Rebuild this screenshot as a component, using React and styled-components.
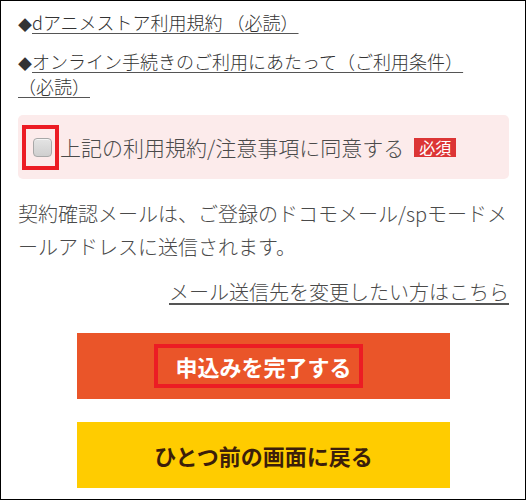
import React from 'react'
import styled, { createGlobalStyle } from 'styled-components'

const GlobalStyle = createGlobalStyle`
  html, body { margin: 0; padding: 0; background: #fff; }
  body {
    font-family: "Noto Sans CJK JP", "Noto Sans", Roboto, sans-serif;
    font-weight: 300;
    color: #444;
  }
`

const Page = styled.div`
  box-sizing: border-box;
  width: 526px;
  height: 500px;
  border: 1px solid #000;
  padding: 9px 16px 0 17px;
  overflow: hidden;
`

const TermLink = styled.p`
  margin: 0 0 14px;
  font-size: 18px;
  line-height: 25px;
  color: #333;
  a {
    color: #333;
    text-decoration: underline;
    text-decoration-color: #555;
    text-underline-offset: 3px;
  }
`

const Diamond = styled.span`
  font-size: 14px;
  line-height: 0;
  color: #333;
`

const NoWrap = styled.span`
  white-space: nowrap;
`

const AgreeBox = styled.label`
  display: flex;
  align-items: center;
  box-sizing: border-box;
  height: 64px;
  margin-top: 16px;
  padding: 0 0 0 4px;
  background: #fcebeb;
  border-radius: 5px;
  cursor: pointer;
`

const Highlight = styled.span`
  box-sizing: border-box;
  display: flex;
  align-items: center;
  justify-content: center;
  width: 37px;
  height: 45px;
  border: 4px solid #ec1c24;
  padding-left: 3px;
  margin-right: 1px;
`

const Check = styled.span`
  box-sizing: border-box;
  width: 19px;
  height: 19px;
  border-radius: 4px;
  border: 1px solid #a8a8a8;
  background: linear-gradient(#e4e4e4, #cfcfcf);
  box-shadow: inset 0 1px 0 #f4f4f4;
`

const AgreeText = styled.span`
  font-size: 21px;
  line-height: 1;
  color: #4a4a4a;
`

const Badge = styled.span`
  display: inline-flex;
  align-items: center;
  justify-content: center;
  width: 42px;
  height: 19px;
  margin-left: 10px;
  background: #dc3535;
  color: #fff;
  font-size: 16px;
  font-weight: 400;
  line-height: 1;
`

const Notice = styled.p`
  margin: 18px 0 0;
  font-size: 20px;
  line-height: 33px;
  color: #4a4a4a;
`

const ChangeLink = styled.a`
  display: block;
  margin-top: 14px;
  text-align: right;
  font-size: 20px;
  line-height: 30px;
  color: #4a4a4a;
  text-decoration: underline;
  text-decoration-color: #555;
  text-underline-offset: 3px;
`

const Buttons = styled.div`
  display: flex;
  flex-direction: column;
  align-items: center;
  gap: 23px;
  margin-top: 26px;
`

const Button = styled.button`
  display: flex;
  align-items: center;
  justify-content: center;
  width: 373px;
  height: 66px;
  border: none;
  padding: 0;
  background: ${p => p.$bg};
  color: ${p => p.$fg};
  font-family: inherit;
  font-size: 22px;
  font-weight: 700;
  cursor: pointer;
`

const Marked = styled.span`
  box-sizing: border-box;
  display: inline-flex;
  align-items: center;
  height: 44px;
  padding: 0 7px 0 17px;
  margin-right: 10px;
  border: 4px solid #ec1c24;
`

export default function App() {
  return (
    <>
      <GlobalStyle />
      <Page>
        <TermLink>
          <Diamond>◆</Diamond><a href="#">dアニメストア利用規約 （必読）</a>
        </TermLink>
        <TermLink>
          <Diamond>◆</Diamond><a href="#">オンライン手続きのご利用にあたって（ご利用条件） <NoWrap>（必読）</NoWrap></a>
        </TermLink>

        <AgreeBox>
          <Highlight><Check /></Highlight>
          <AgreeText>上記の利用規約/注意事項に同意する</AgreeText>
          <Badge>必須</Badge>
        </AgreeBox>

        <Notice>
          契約確認メールは、ご登録のドコモメール/spモードメールアドレスに送信されます。
        </Notice>

        <ChangeLink href="#">メール送信先を変更したい方はこちら</ChangeLink>

        <Buttons>
          <Button $bg="#ea5529" $fg="#fff">
            <Marked>申込みを完了する</Marked>
          </Button>
          <Button $bg="#ffcc00" $fg="#3c1e0a">ひとつ前の画面に戻る</Button>
        </Buttons>
      </Page>
    </>
  )
}
